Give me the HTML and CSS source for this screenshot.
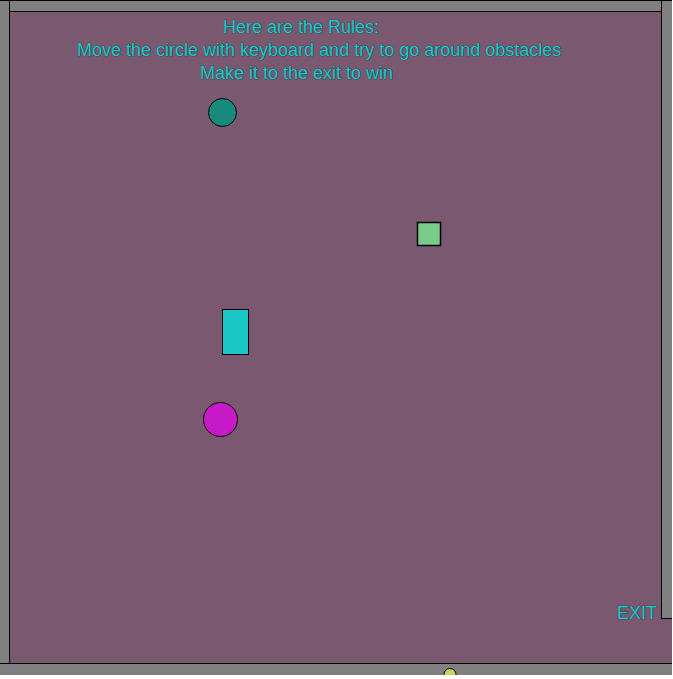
FILE: index.html
```html
<!DOCTYPE html>
<html>
<head>
<meta charset="utf-8">
<link rel="stylesheet" href="styles.css">
</head>
<body>
<svg class="game" width="672" height="675" viewBox="0 0 672 675">
  <rect class="floor" x="0" y="0" width="672" height="675"/>
  <rect class="wall" x="0.5" y="0.5" width="673" height="11"/>
  <rect class="wall" x="-1" y="0.5" width="10.5" height="680"/>
  <rect class="wall" x="661.5" y="0.5" width="12" height="618"/>
  <rect class="wall" x="-1" y="663.5" width="675" height="12"/>
  <circle class="coin" cx="450" cy="674.5" r="6"/>
  <text class="rules" x="223" y="33">Here are the Rules:</text>
  <text class="rules" x="77" y="56">Move the circle with keyboard and try to go around obstacles</text>
  <text class="rules" x="200" y="79">Make it to the exit to win</text>
  <text class="rules" x="617" y="619">EXIT</text>
  <circle class="enemy" cx="222.5" cy="112.5" r="14"/>
  <rect class="block" x="417.5" y="222.5" width="23" height="23"/>
  <rect class="pillar" x="222.5" y="309.5" width="26" height="45"/>
  <circle class="player" cx="220.5" cy="419.5" r="17"/>
</svg>
</body>
</html>
```
FILE: styles.css
```css
html, body {
  margin: 0;
  padding: 0;
  background: #ffffff;
}
.game {
  display: block;
}
.floor {
  fill: #7a5870;
}
.wall {
  fill: #808080;
  stroke: #000000;
  stroke-width: 1;
}
.coin {
  fill: #d0d060;
  stroke: #000000;
  stroke-width: 1;
}
.rules {
  font-family: "Liberation Sans", Arial, sans-serif;
  font-size: 18px;
  fill: #1ac8c8;
  stroke: #14393e;
  stroke-width: 0.7;
  paint-order: stroke;
}
.enemy {
  fill: #178a7c;
  stroke: #000000;
  stroke-width: 1;
}
.block {
  fill: #7acb8a;
  stroke: #000000;
  stroke-width: 1.5;
}
.pillar {
  fill: #1ac8c8;
  stroke: #000000;
  stroke-width: 1;
}
.player {
  fill: #c61ac8;
  stroke: #000000;
  stroke-width: 1;
}
```
